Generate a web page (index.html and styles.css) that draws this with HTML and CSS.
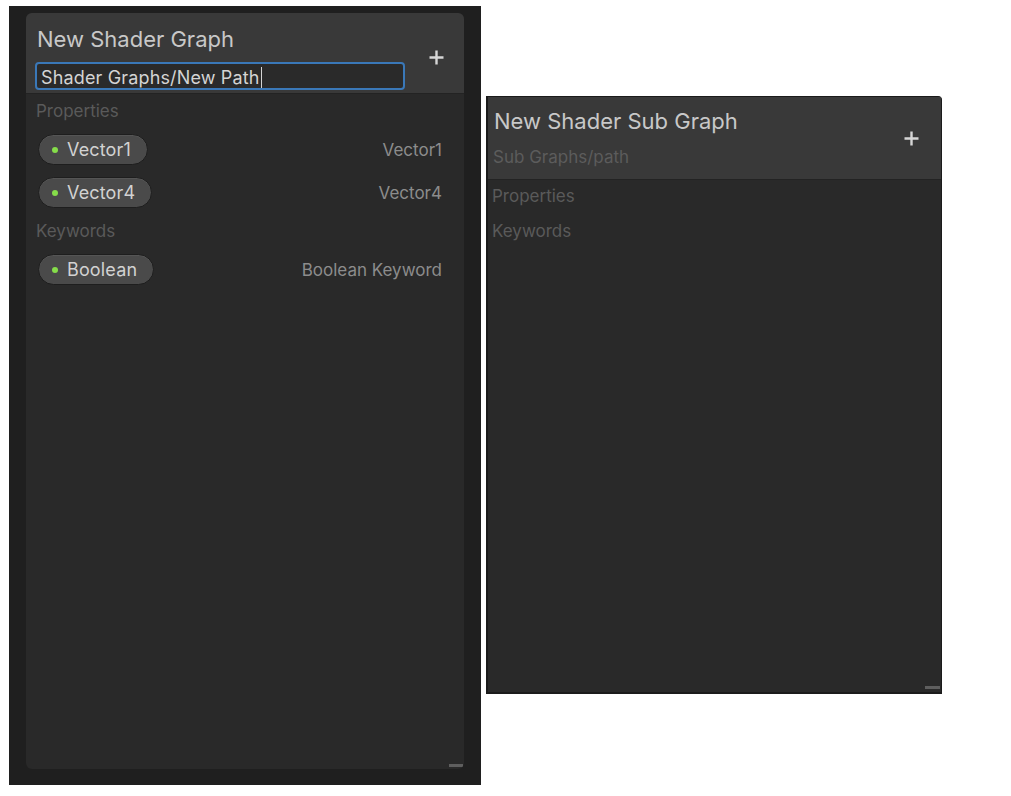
FILE: index.html
```html
<!DOCTYPE html>
<html>
<head>
<meta charset="utf-8">
<link rel="stylesheet" href="styles.css">
</head>
<body>
<div class="stage">
  <div class="frame">
    <div class="panel main">
      <div class="header">
        <div class="header-text">
          <div class="title">New Shader Graph</div>
          <div class="path-input"><span class="path-value">Shader Graphs/New Path</span><span class="caret"></span></div>
        </div>
        <div class="plus">
          <svg width="15" height="15" viewBox="0 0 15 15"><path d="M7.5 0.5v14M0.5 7.5h14" stroke="#d6d6d6" stroke-width="2.4"/></svg>
        </div>
      </div>
      <div class="body">
        <div class="section">Properties</div>
        <div class="row first">
          <div class="pill"><span class="dot"></span><span class="pill-name">Vector1</span></div>
          <div class="type">Vector1</div>
        </div>
        <div class="row">
          <div class="pill"><span class="dot"></span><span class="pill-name">Vector4</span></div>
          <div class="type">Vector4</div>
        </div>
        <div class="section kw">Keywords</div>
        <div class="row first">
          <div class="pill"><span class="dot"></span><span class="pill-name">Boolean</span></div>
          <div class="type">Boolean Keyword</div>
        </div>
      </div>
      <div class="grip"></div>
    </div>
  </div>
  <div class="panel sub">
    <div class="header">
      <div class="header-text">
        <div class="title">New Shader Sub Graph</div>
        <div class="path-hint">Sub Graphs/path</div>
      </div>
      <div class="plus">
        <svg width="15" height="15" viewBox="0 0 15 15"><path d="M7.5 0.5v14M0.5 7.5h14" stroke="#d6d6d6" stroke-width="2.4"/></svg>
      </div>
    </div>
    <div class="body">
      <div class="section">Properties</div>
      <div class="section kw2">Keywords</div>
    </div>
    <div class="grip"></div>
  </div>
</div>
</body>
</html>
```
FILE: styles.css
```css
html, body {
  margin: 0;
  padding: 0;
  background: #ffffff;
}
body {
  font-family: Inter, "Noto Sans", "Liberation Sans", sans-serif;
}
.stage {
  display: flex;
  align-items: flex-start;
  padding: 6px 0 0 9px;
}
.frame {
  width: 472px;
  height: 779px;
  box-sizing: border-box;
  background: #1f1f1f;
  padding: 7px 16px 16px 17px;
}
.panel {
  position: relative;
  display: flex;
  flex-direction: column;
  background: #292929;
  box-sizing: border-box;
}
.panel.main {
  width: 438px;
  height: 756px;
  border-radius: 6px;
  overflow: hidden;
}
.panel.sub {
  margin: 90px 0 0 5px;
  width: 456px;
  height: 598px;
  border: 1px solid #1b1b1b;
  border-left-width: 2px;
  border-bottom-width: 2px;
  border-top-right-radius: 4px;
}
.header {
  display: flex;
  align-items: center;
  background: #393939;
  border-bottom: 1px solid #232323;
  box-sizing: border-box;
}
.main .header {
  height: 81px;
  padding: 13px 0 0 9px;
  align-items: flex-start;
}
.sub .header {
  height: 83px;
  padding: 0 0 0 4px;
}
.header-text {
  flex: 1;
  display: flex;
  flex-direction: column;
}
.title {
  font-size: 22px;
  line-height: 26px;
  color: #c8c8c8;
  padding-left: 2px;
}
.sub .title {
  margin-top: -2px;
}
.path-input {
  margin-top: 10px;
  width: 370px;
  height: 28px;
  box-sizing: border-box;
  border: 2px solid #3a78b8;
  border-radius: 4px;
  background: #2a2a2a;
  display: flex;
  align-items: center;
  padding: 2px 0 0 4px;
  font-size: 18px;
  letter-spacing: 0.15px;
  color: #d4d4d4;
}
.caret {
  display: inline-block;
  width: 1px;
  height: 21px;
  background: #d4d4d4;
  margin-left: 1px;
}
.path-hint {
  margin-top: 13px;
  font-size: 17px;
  line-height: 20px;
  color: #5c5c5c;
  padding-left: 1px;
}
.plus {
  width: 15px;
  height: 15px;
  display: flex;
}
.main .plus {
  margin: 24px 20px 0 0;
}
.sub .plus {
  margin: 0 22px 0 0;
}
.body {
  flex: 1;
  display: flex;
  flex-direction: column;
}
.main .body {
  padding: 7px 22px 0 10px;
}
.sub .body {
  padding: 6px 0 0 4px;
}
.section {
  font-size: 17px;
  line-height: 20px;
  color: #5a5a5a;
}
.section.kw {
  margin-top: 13px;
}
.section.kw2 {
  margin-top: 15px;
}
.row {
  display: flex;
  align-items: center;
  justify-content: space-between;
  margin-top: 12px;
}
.row.first {
  margin-top: 13px;
}
.pill {
  height: 31px;
  box-sizing: border-box;
  display: flex;
  align-items: center;
  background: #4a4a4a;
  border: 1px solid #1e1e1e;
  border-radius: 16px;
  padding: 0 16px 0 13px;
  margin-left: 2px;
  box-shadow: inset 0 1px 0 #555555;
}
.dot {
  width: 6px;
  height: 6px;
  border-radius: 50%;
  background: #86dd4a;
  margin-right: 9px;
}
.pill-name {
  font-size: 18px;
  letter-spacing: 0.15px;
  color: #d2d2d2;
}
.type {
  font-size: 17px;
  color: #8c8c8c;
}
.grip {
  position: absolute;
  width: 14px;
  height: 3px;
  background: #5e5e5e;
}
.main .grip {
  right: 1px;
  bottom: 2px;
}
.sub .grip {
  right: 1px;
  bottom: 3px;
  width: 15px;
}
```
